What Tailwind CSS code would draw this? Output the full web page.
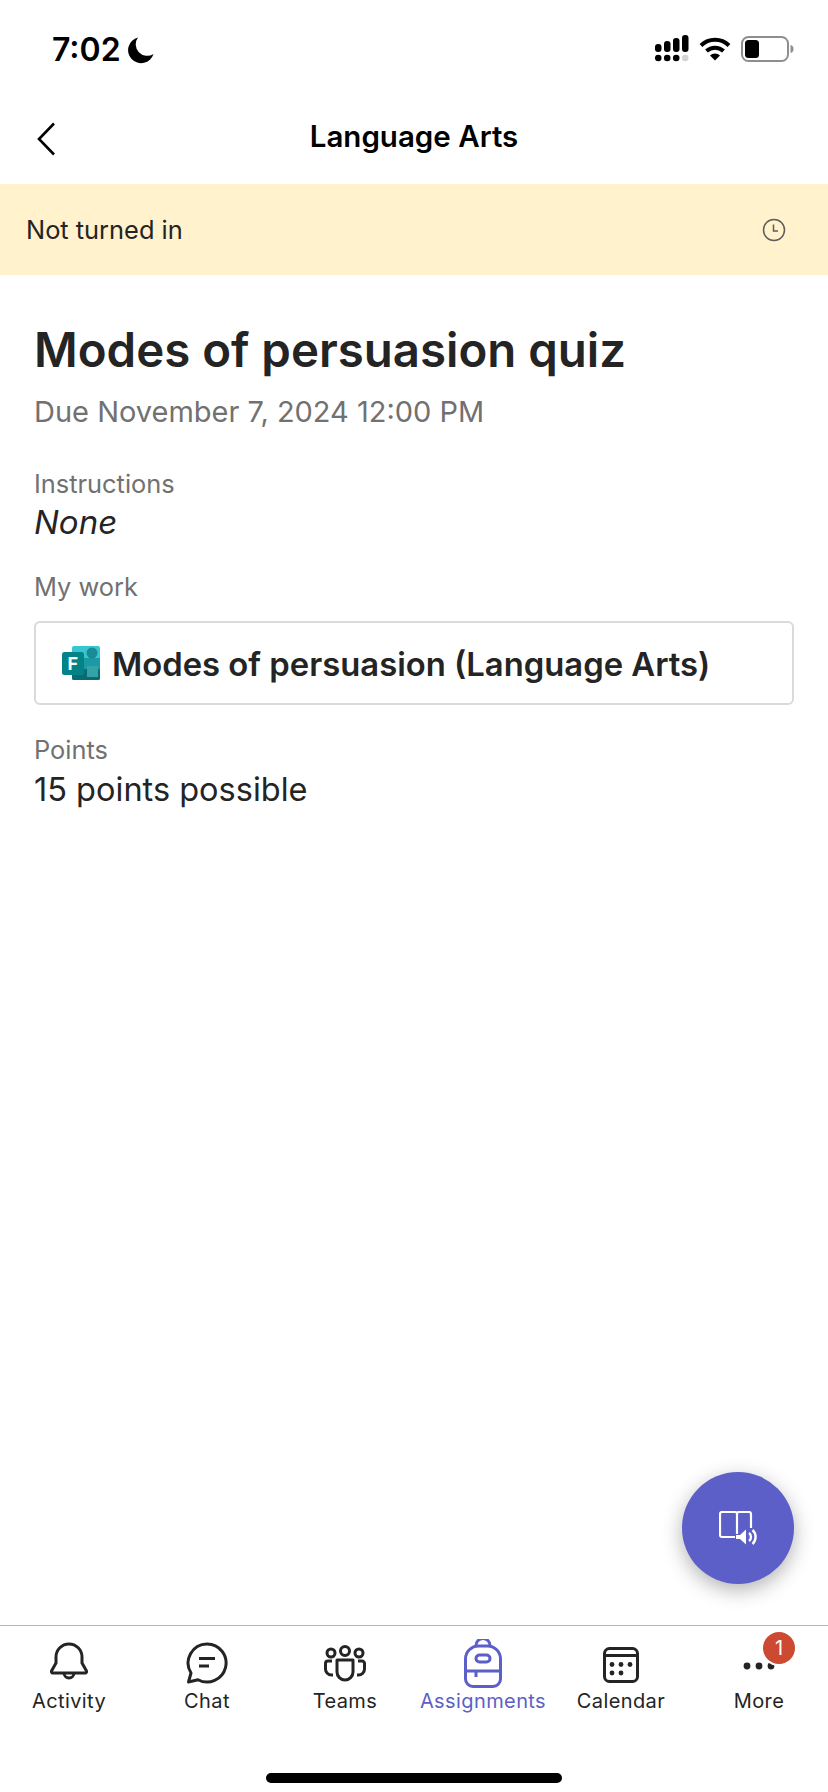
<!DOCTYPE html>
<html lang="en">
<head>
    <meta charset="UTF-8">
    <meta name="viewport" content="width=device-width, initial-scale=1.0">
    <title>Language Arts</title>
    <script src="https://cdn.jsdelivr.net/npm/@tailwindcss/browser@4"></script>
</head>
<body class="bg-white font-['Inter',sans-serif] text-[#242424]">
<div class="relative flex h-[1792px] w-[828px] flex-col overflow-hidden">

    <!-- Status bar -->
    <div class="flex h-[92px] items-start justify-between pt-[32px] pl-[52px] pr-[34px]">
        <div class="flex items-center gap-[6px]">
            <span class="text-[32px] leading-[36px] font-semibold text-black">7:02</span>
            <svg width="28" height="28" viewBox="0 0 28 28"><path d="M11 1.500a13 13 0 1 0 15.500 16.500A11.500 11.500 0 0 1 11 1.500z" fill="#000"/></svg>
        </div>
        <div class="flex items-center gap-[10px] pt-[3px]">
            <svg width="34" height="28" viewBox="0 0 34 28">
                <g fill="#000">
                    <rect x="0" y="9" width="6.500" height="8" rx="3"/><rect x="9" y="6" width="6.500" height="11" rx="3"/><rect x="18" y="3" width="6.500" height="14" rx="3"/><rect x="27" y="0" width="6.500" height="17" rx="3"/>
                    <circle cx="3.200" cy="23" r="3.300"/><circle cx="12.200" cy="23" r="3.300"/><circle cx="21.200" cy="23" r="3.300"/>
                </g>
                <circle cx="30.200" cy="23" r="3.300" fill="#d4d4d4"/>
            </svg>
            <svg width="32" height="24" viewBox="0 0 32 24" fill="none" stroke="#000" stroke-width="4">
                <path d="M2 8.500a20 20 0 0 1 28 0"/><path d="M7.500 14a12.500 12.500 0 0 1 17 0"/><path d="M16 23.500l-5-5a7 7 0 0 1 10 0z" fill="#000" stroke="none"/>
            </svg>
            <svg width="53" height="28" viewBox="0 0 53 28">
                <rect x="1" y="2" width="46" height="24" rx="6.500" fill="none" stroke="#8e8e8e" stroke-width="2"/>
                <rect x="4" y="5" width="14" height="18" rx="3.500" fill="#000"/>
                <path d="M49.500 10v8a4 4 0 0 0 3-4a4 4 0 0 0-3-4z" fill="#8e8e8e"/>
            </svg>
        </div>
    </div>

    <!-- Nav bar -->
    <div class="grid h-[92px] grid-cols-[92px_1fr_92px] items-center">
        <svg class="ml-[36px] mt-[2px]" width="20" height="34" viewBox="0 0 20 34" fill="none" stroke="#000" stroke-width="2.600"><path d="M18 1.500L3 17l15 15.500"/></svg>
        <h1 class="mb-[4px] text-center text-[29.500px] font-semibold text-black">Language Arts</h1>
    </div>

    <!-- Status banner -->
    <div class="flex h-[91px] items-center justify-between bg-[#fff2cc] pl-[26px] pr-[42px]">
        <span class="mt-[2px] text-[25.400px]">Not turned in</span>
        <svg width="24" height="24" viewBox="0 0 24 24" fill="none" stroke="#5c5c5c" stroke-width="1.500"><circle cx="12" cy="12" r="10.500"/><path d="M11.500 6.500V13H16"/></svg>
    </div>

    <!-- Assignment details -->
    <div class="flex flex-1 flex-col px-[34px] pt-[46px]">
        <h2 class="text-[47.400px] leading-[58px] font-semibold">Modes of persuasion quiz</h2>
        <p class="mt-[15px] text-[29px] leading-[36px] text-[#717171]">Due November 7, 2024 12:00 PM</p>
        <p class="mt-[38px] text-[25.400px] leading-[32px] text-[#717171]">Instructions</p>
        <p class="mt-[2px] text-[33px] leading-[40px] italic">None</p>
        <p class="mt-[29px] text-[25.400px] leading-[32px] text-[#717171]">My work</p>
        <div class="mt-[18px] flex h-[84px] w-[760px] items-center gap-[12px] rounded-[6px] border-2 border-[#d9d9de] pl-[26px]">
            <svg width="38" height="36" viewBox="0 0 38 36">
                <path d="M10 3a2 2 0 0 1 2-2h24a2 2 0 0 1 2 2v12H10z" fill="#37c6d0"/>
                <rect x="10" y="13" width="28" height="12" fill="#1b9aa5"/>
                <rect x="10" y="24" width="28" height="11" rx="1.500" fill="#0b6a73"/>
                <rect x="25" y="21" width="11" height="11" fill="#33a3a5"/>
                <circle cx="30" cy="8" r="5.500" fill="#1a8a94"/>
                <rect x="0" y="7" width="22" height="23" rx="2.500" fill="#038387"/>
                <text x="5.500" y="25" fill="#fff" font-size="18" font-weight="700" font-family="Inter, sans-serif">F</text>
            </svg>
            <span class="mt-[3px] text-[32.800px] font-semibold">Modes of persuasion (Language Arts)</span>
        </div>
        <p class="mt-[29px] text-[25.400px] leading-[32px] text-[#717171]">Points</p>
        <p class="mt-[4px] text-[32.500px] leading-[40px]">15 points possible</p>
    </div>

    <!-- Read aloud button -->
    <button class="absolute left-[682px] top-[1472px] flex h-[112px] w-[112px] items-center justify-center rounded-full bg-[#5b5fc7] shadow-[0_6px_20px_rgba(0,0,0,0.3)]">
        <svg width="38" height="34" viewBox="0 0 38 34" fill="none" stroke="#fff" stroke-width="2.200">
            <path d="M16 26H3a2 2 0 0 1-2-2V3a2 2 0 0 1 2-2h13a2 2 0 0 1 2 2v20"/>
            <path d="M18 3a2 2 0 0 1 2-2h10a2 2 0 0 1 2 2v14"/>
            <path d="M17 24h4l6-5.500v15L21 28h-4z" fill="#fff" stroke="none"/>
            <path d="M30 22a5 5 0 0 1 0 8" stroke-width="2.400"/><path d="M33.500 19a9.500 9.500 0 0 1 0 14" stroke-width="2.400"/>
        </svg>
    </button>

    <!-- Tab bar -->
    <nav class="grid h-[167px] grid-cols-6 border-t border-[#b5b5b5] text-[20px] leading-[24px] tracking-[0.4px]">
        <div class="flex flex-col items-center">
            <div class="flex h-[58px] items-end">
                <svg class="mb-[4px]" width="38" height="40" viewBox="0 0 38 40" fill="none" stroke="#242424" stroke-width="3">
                    <path d="M6 17a13 13 0 0 1 26 0v6l4.500 8a1.500 1.500 0 0 1-1.300 2H2.800a1.500 1.500 0 0 1-1.300-2L6 23z" stroke-linejoin="round"/><path d="M14 33a5 5 0 0 0 10 0"/>
                </svg>
            </div>
            <span class="mt-[5px]">Activity</span>
        </div>
        <div class="flex flex-col items-center">
            <div class="flex h-[58px] items-end">
                <svg width="42" height="42" viewBox="0 0 42 42" fill="none" stroke="#242424" stroke-width="3">
                    <path d="M21 2a19 19 0 1 1-9 35.700L2.500 40 5 31A19 19 0 0 1 21 2z" stroke-linejoin="round"/><path d="M13 16.500h16M13 24h10"/>
                </svg>
            </div>
            <span class="mt-[5px]">Chat</span>
        </div>
        <div class="flex flex-col items-center">
            <div class="flex h-[58px] items-end">
                <svg class="mb-[1px]" width="42" height="38" viewBox="0 0 42 38" fill="none" stroke="#242424" stroke-width="3">
                    <circle cx="21" cy="6" r="4.500"/><circle cx="7" cy="8" r="4"/><circle cx="35" cy="8" r="4"/>
                    <path d="M13 15h16v12a8 8 0 0 1-16 0z" stroke-linejoin="round"/>
                    <path d="M8 16H4a2.500 2.500 0 0 0-2.500 2.500V24a6 6 0 0 0 6 6H9"/><path d="M34 16h4a2.500 2.500 0 0 1 2.500 2.500V24a6 6 0 0 1-6 6H33"/>
                </svg>
            </div>
            <span class="mt-[5px]">Teams</span>
        </div>
        <div class="flex flex-col items-center text-[#5b5fc7]">
            <div class="flex h-[58px] items-end">
                <svg class="-mb-[4px]" width="38" height="49" viewBox="0 0 38 49" fill="none" stroke="#5b5fc7" stroke-width="3">
                    <path d="M12 8V6.500a7 7 0 0 1 14 0V8"/>
                    <path d="M1.500 20a13 13 0 0 1 13-13h9a13 13 0 0 1 13 13v20a7.500 7.500 0 0 1-7.500 7.500H9A7.500 7.500 0 0 1 1.500 40z"/>
                    <rect x="12" y="16" width="14" height="7" rx="3.500"/>
                    <path d="M1.500 32h35M12 32v6"/>
                </svg>
            </div>
            <span class="mt-[5px]">Assignments</span>
        </div>
        <div class="flex flex-col items-center">
            <div class="flex h-[58px] items-end">
                <svg class="mb-[1px]" width="36" height="36" viewBox="0 0 36 36" fill="none" stroke="#242424" stroke-width="3">
                    <rect x="1.500" y="1.500" width="33" height="33" rx="5"/><path d="M1.500 8.500h33"/>
                    <g fill="#242424" stroke="none"><circle cx="9" cy="17.500" r="2.400"/><circle cx="18" cy="17.500" r="2.400"/><circle cx="27" cy="17.500" r="2.400"/><circle cx="9" cy="26" r="2.400"/><circle cx="18" cy="26" r="2.400"/></g>
                </svg>
            </div>
            <span class="mt-[5px]">Calendar</span>
        </div>
        <div class="relative flex flex-col items-center">
            <div class="flex h-[58px] items-end">
                <svg class="mb-[14px]" width="32" height="8" viewBox="0 0 32 8" fill="#242424"><circle cx="4" cy="4" r="3.400"/><circle cx="16" cy="4" r="3.400"/><circle cx="28" cy="4" r="3.400"/></svg>
            </div>
            <span class="mt-[5px]">More</span>
            <span class="absolute left-[73px] top-[6px] flex h-[32px] w-[32px] items-center justify-center rounded-full bg-[#cc4a31] text-[20px] tracking-normal text-white ring-2 ring-white">1</span>
        </div>
        <div class="col-span-6 flex justify-center pt-[51px]">
            <div class="h-[10px] w-[296px] rounded-full bg-black"></div>
        </div>
    </nav>
</div>
</body>
</html>
